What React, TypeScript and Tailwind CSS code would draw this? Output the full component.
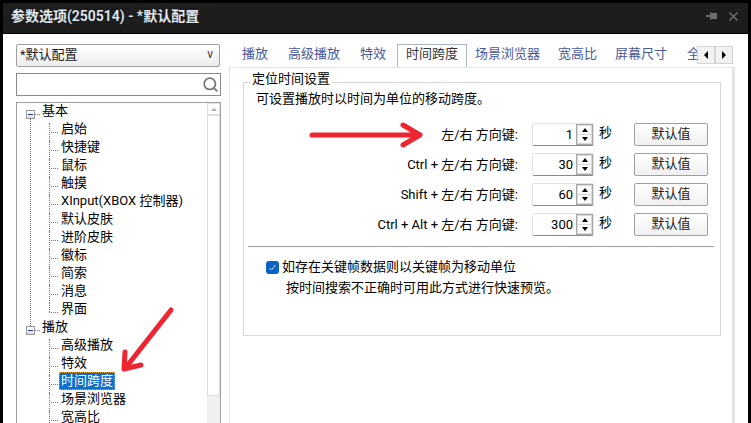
import { Search } from 'lucide-react';

const font = { fontFamily: 'Roboto, "Noto Sans CJK SC", sans-serif' };

const tabs = [
  { name: '播放', cls: '' },
  { name: '高级播放', cls: '' },
  { name: '特效', cls: '' },
  { name: '时间跨度', cls: '' },
  { name: '场景浏览器', cls: '-ml-px' },
  { name: '宽高比', cls: '-ml-[2px]' },
  { name: '屏幕尺寸', cls: '-ml-[2px]' },
  { name: '全', cls: '' },
];

const basicItems = ['启始', '快捷键', '鼠标', '触摸', 'XInput(XBOX 控制器)', '默认皮肤', '进阶皮肤', '徽标', '简索', '消息', '界面'];
const playItems = ['高级播放', '特效', '时间跨度', '场景浏览器', '宽高比'];

const timeRows = [
  { label: '左/右 方向键:', value: 1 },
  { label: 'Ctrl + 左/右 方向键:', value: 30 },
  { label: 'Shift + 左/右 方向键:', value: 60 },
  { label: 'Ctrl + Alt + 左/右 方向键:', value: 300 },
];

function TreeGroup({ title, items, selected, last }: { title: string; items: string[]; selected?: string; last?: boolean }) {
  return (
    <div className="relative">
      <div className="flex h-[18px] items-center pl-[9px]">
        <div className="flex h-[9px] w-[9px] items-center justify-center border border-[#9a9a9a] bg-gradient-to-b from-white to-[#d8dde6]">
          <div className="h-px w-[5px] bg-[#2b3f8c]" />
        </div>
        <div className="mr-[2px] w-[5px] border-t border-dotted border-[#777]" />
        <span className="-translate-y-[3px] text-[13px] leading-[18px] text-black">{title}</span>
      </div>
      {!last && <div className="absolute top-[13px] bottom-[-5px] left-[13px] border-l border-dotted border-[#777]" />}
      {items.map((item, i) => (
        <div key={item} className="relative flex h-[18px] items-center pl-[32px]">
          <div className={`absolute left-[32px] top-0 border-l border-dotted border-[#777] ${i === items.length - 1 && last !== true ? 'h-[9px]' : 'h-[18px]'}`} />
          <div className="mr-[1px] w-[9px] border-t border-dotted border-[#777]" />
          <span
            className={
              item === selected
                ? '-translate-y-[3px] whitespace-nowrap border border-dotted border-[#e8a33c] bg-[#0b6fce] px-px text-[13px] leading-[16px] text-white'
                : '-translate-y-[3px] whitespace-nowrap px-[2px] text-[13px] leading-[18px] text-black'
            }
          >
            {item}
          </span>
        </div>
      ))}
    </div>
  );
}

function Spinner({ value }: { value: number }) {
  return (
    <div className="flex h-[23px] w-[62px] rounded-[2px] border border-[#e2e2e2] border-b-[#8a8a8a] bg-white">
      <div className="flex-1 pr-[3px] text-right text-[13px] leading-[21px] text-black">{value}</div>
      <div className="flex w-[17px] flex-col gap-px border border-[#a8a8a8] bg-[#d9d9d9] p-px">
        <div className="flex flex-1 items-center justify-center bg-white">
          <div className="h-0 w-0 border-x-[3px] border-b-[4px] border-x-transparent border-b-black" />
        </div>
        <div className="flex flex-1 items-center justify-center bg-white">
          <div className="h-0 w-0 border-x-[3px] border-t-[4px] border-x-transparent border-t-black" />
        </div>
      </div>
    </div>
  );
}

export default function App() {
  return (
    <div className="relative h-[423px] w-[751px] overflow-hidden bg-black px-[3px] pt-[3px]" style={font}>
      {/* Title bar */}
      <div className="flex h-[30px] items-center justify-between bg-[#1d1d1d] pb-[4px] pl-[8px] pr-[10px]">
        <span className="text-[14px] font-semibold text-[#dfe7ee]">参数选项(250514) - *默认配置</span>
        <div className="flex items-center gap-[11px]">
          <svg width="12" height="10" viewBox="0 0 12 10">
            <path d="M0 4h4V1h1v1h6v6H5v1H4V6H0z" fill="#6f6f6f" />
          </svg>
          <svg width="9" height="9" viewBox="0 0 9 9">
            <path d="M0.5 0.5l8 8M8.5 0.5l-8 8" stroke="#6f6f6f" strokeWidth="1.4" />
          </svg>
        </div>
      </div>

      {/* Window body */}
      <div className="mt-px flex h-[390px] bg-white pt-[10px]">
        {/* Left column */}
        <div className="ml-[13px] flex w-[205px] flex-col">
          <div className="flex h-[23px] w-[204px] items-center justify-between rounded-[2px] border border-[#a0a0a0] bg-gradient-to-b from-white to-[#ececec] pb-[3px] pl-[3px] pr-[6px]">
            <span className="text-[13px] leading-none text-[#1a1a1a]">*默认配置</span>
            <span className="text-[12px] leading-none text-[#333]">v</span>
          </div>
          <div className="mt-[6px] flex h-[23px] items-center justify-end border border-[#8a8a8a] pr-px">
            <Search size={17} strokeWidth={2.5} className="text-[#777]" />
          </div>
          <div className="mt-[6px] flex min-h-0 flex-1 border border-[#a0a0a0] border-b-0">
            <div className="min-w-0 flex-1 overflow-hidden pt-[2px]">
              <TreeGroup title="基本" items={basicItems} />
              <TreeGroup title="播放" items={playItems} selected="时间跨度" last />
            </div>
            <div className="flex w-[13px] shrink-0 flex-col bg-[#f0f0f0]">
              <div className="flex h-[12px] items-center justify-center border border-[#e0e0e0] bg-white">
                <div className="h-0 w-0 border-x-[3px] border-b-[3px] border-x-transparent border-b-[#aaa]" />
              </div>
              <div className="h-[281px] border border-[#dcdcdc] bg-white" />
            </div>
          </div>
        </div>

        {/* Right column */}
        <div className="ml-[8px] flex w-[506px] flex-col">
          <div className="flex h-[23px] items-end overflow-hidden">
            <div className="flex min-w-0 flex-1 items-end overflow-hidden pl-[3px]">
              {tabs.map((tab) =>
                tab.name === '时间跨度' ? (
                  <div
                    key={tab.name}
                    className="-mr-px ml-px h-[23px] shrink-0 whitespace-nowrap border border-b-0 border-[#a9b4cc] bg-white px-[8px] text-[13px] leading-[18px] text-[#333]"
                  >
                    {tab.name}
                  </div>
                ) : (
                  <div
                    key={tab.name}
                    className={`h-[22px] shrink-0 whitespace-nowrap px-[10px] text-[13px] leading-[17px] text-[#4a5a9a] ${tab.cls}`}
                  >
                    {tab.name}
                  </div>
                ),
              )}
            </div>
            <div className="mb-[3px] mr-[2px] flex h-[18px] w-[36px] shrink-0 border border-[#d5d5d5] bg-[#f2f2f2]">
              <div className="flex flex-1 items-center justify-center border-r-2 border-[#d5d5d5]">
                <div className="h-0 w-0 border-y-[4px] border-r-[4px] border-y-transparent border-r-black" />
              </div>
              <div className="flex flex-1 items-center justify-center">
                <div className="h-0 w-0 border-y-[4px] border-l-[4px] border-y-transparent border-l-black" />
              </div>
            </div>
          </div>
          <div className="flex-1 border border-r-[3px] border-[#e4e4e4] px-[13px] pt-[14px]">
            <div className="relative h-[254px] w-[478px] border border-[#d8d8d8]">
              <span className="absolute -top-[13px] left-[7px] bg-white px-px text-[13px] leading-[18px] text-black">定位时间设置</span>
              <p className="pl-[12px] pt-[7px] text-[13px] leading-[18px] text-black">可设置播放时以时间为单位的移动跨度。</p>

              <div className="mt-[15px] flex flex-col gap-[7px]">
                {timeRows.map((row) => (
                  <div key={row.label} className="flex h-[23px] items-center">
                    <span className="w-[274px] text-right text-[13px] text-black">{row.label}</span>
                    <div className="ml-[14px]">
                      <Spinner value={row.value} />
                    </div>
                    <span className="ml-[5px] w-[35px] pb-[4px] text-[13px] leading-[18px] text-black">秒</span>
                    <button className="h-[23px] w-[74px] rounded-[2px] border border-[#a0a0a0] bg-gradient-to-b from-white to-[#f0f0f0] pb-[2px] text-[13px] text-[#222]">
                      默认值
                    </button>
                  </div>
                ))}
              </div>

              <div className="mx-[4px] mt-[10px] h-px w-[466px] bg-[#a0a0a0]" />

              <div className="mt-[11px] flex items-center pl-[22px]">
                <div className="flex h-[13px] w-[13px] items-center justify-center rounded-[3px] bg-[#0b62c4]">
                  <svg width="9" height="9" viewBox="0 0 9 9">
                    <path d="M1.5 5l2 2 4-5" fill="none" stroke="#cfe2f7" strokeWidth="1" />
                  </svg>
                </div>
                <span className="ml-[3px] text-[13px] leading-[18px] text-black">如存在关键帧数据则以关键帧为移动单位</span>
              </div>
              <p className="mt-[3px] pl-[42px] text-[13px] leading-[18px] text-black">按时间搜索不正确时可用此方式进行快速预览。</p>
            </div>
          </div>
        </div>
      </div>

      {/* Red annotation arrows */}
      <svg className="pointer-events-none absolute left-0 top-0" width="751" height="423" viewBox="0 0 751 423">
        <path d="M312 135H418M403 125l17 10-17 10" fill="none" stroke="#ee2430" strokeWidth="5" strokeLinecap="round" strokeLinejoin="round" />
        <path d="M171 310L127 366M125 352l-1 17 17-4" fill="none" stroke="#ee2430" strokeWidth="5" strokeLinecap="round" strokeLinejoin="round" />
      </svg>
    </div>
  );
}
